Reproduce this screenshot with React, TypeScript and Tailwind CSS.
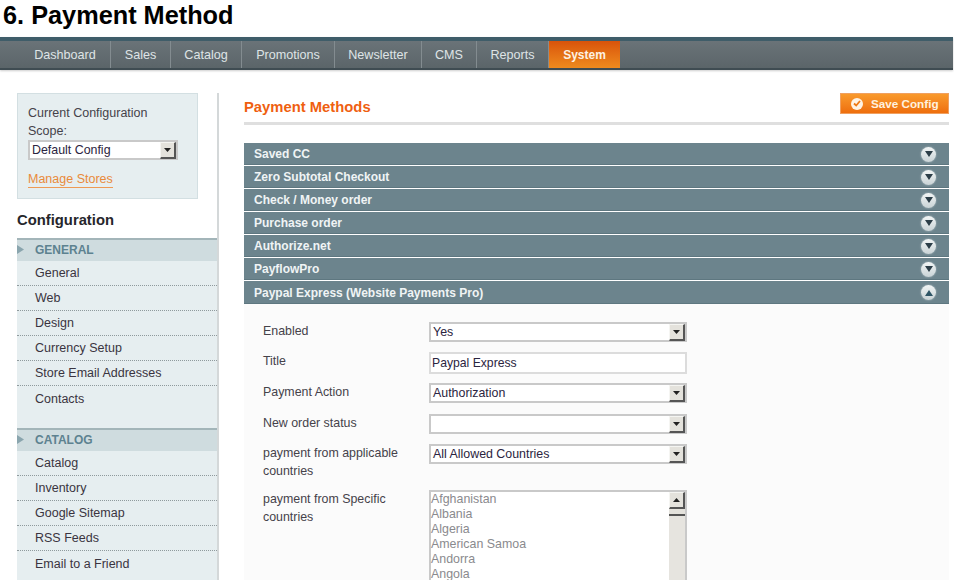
import React from 'react';

const tabs = [
  { label: 'Dashboard', width: 'w-[91px]' },
  { label: 'Sales', width: 'w-[60px]' },
  { label: 'Catalog', width: 'w-[71px]' },
  { label: 'Promotions', width: 'w-[93px]' },
  { label: 'Newsletter', width: 'w-[87px]' },
  { label: 'CMS', width: 'w-[55px]' },
  { label: 'Reports', width: 'w-[72px]' },
];
const closedSections = ['Saved CC', 'Zero Subtotal Checkout', 'Check / Money order', 'Purchase order', 'Authorize.net', 'PayflowPro'];
const generalLinks = ['General', 'Web', 'Design', 'Currency Setup', 'Store Email Addresses', 'Contacts'];
const catalogLinks = ['Catalog', 'Inventory', 'Google Sitemap', 'RSS Feeds', 'Email to a Friend'];
const countries = ['Afghanistan', 'Albania', 'Algeria', 'American Samoa', 'Andorra', 'Angola'];

const ArrowBox: React.FC<{ up?: boolean }> = ({ up }) => (
  <div className="flex items-center justify-center w-[16px] h-[17px] bg-[#e4e2dc] border-t border-l border-[#f5f5f2] border-r-2 border-b-2 border-r-[#555] border-b-[#555]">
    <svg width="7" height="4" viewBox="0 0 7 4">
      <path d={up ? 'M0 4 L3.5 0 L7 4 Z' : 'M0 0 L7 0 L3.5 4 Z'} fill="#222" />
    </svg>
  </div>
);

const SelectBox: React.FC<{ value?: string; className?: string }> = ({ value, className }) => (
  <div className={`flex items-center justify-between bg-white border-2 border-[#c9c9c9] text-[12.4px] text-[#2b2440] pl-[2px] ${className ?? 'w-[258px] h-[20px]'}`}>
    <span>{value}</span>
    <ArrowBox />
  </div>
);

const Section: React.FC<{ label: string; open?: boolean }> = ({ label, open }) => (
  <div className={`flex items-center justify-between pl-[10px] pr-[13px] pt-[1px] bg-[#6c848d] border-b border-[#5e7780] text-[12px] font-bold text-[#f0f4f5] ${open ? 'h-[23px]' : 'h-[22px] mb-[1px]'}`}>
    <span>{label}</span>
    <div className="flex items-center justify-center w-[15px] h-[15px] rounded-full bg-gradient-to-b from-[#f2f5f5] to-[#c9d3d6] shadow-[0_0_2px_rgba(220,230,232,0.7)]">
      <svg width="8" height="6" viewBox="0 0 8 6">
        <path d={open ? 'M0 6 L4 0 L8 6 Z' : 'M0 0 L8 0 L4 6 Z'} fill={open ? '#2f5566' : '#2c3e48'} />
      </svg>
    </div>
  </div>
);

const NavGroup: React.FC<{ title: string; links: string[] }> = ({ title, links }) => (
  <div>
    <div className="flex items-center h-[23px] pb-[2px] bg-[#cfdcdf] border-t-2 border-[#a3b5b9] text-[12px] font-bold text-[#5d8290]">
      <svg width="8" height="9" viewBox="0 0 8 9">
        <path d="M0 0 L7 4.5 L0 9 Z" fill="#8aa5ae" />
      </svg>
      <span className="ml-[10px]">{title}</span>
    </div>
    {links.map((link, i) => (
      <div
        key={link}
        className={`flex items-center h-[25px] pl-[18px] pt-[1px] text-[12.5px] text-[#3a3440] ${i < links.length - 1 ? 'border-b border-dotted border-[#8f9a9d]' : ''}`}
      >
        {link}
      </div>
    ))}
  </div>
);

const FormRow: React.FC<{ label: React.ReactNode; className: string; children: React.ReactNode }> = ({ label, className, children }) => (
  <div className={`flex items-start ${className}`}>
    <div className="w-[166px] text-[12.4px] leading-[18px] text-[#45424a]">{label}</div>
    {children}
  </div>
);

export default function App() {
  return (
    <div className="w-[954px] h-[584px] overflow-hidden bg-white font-['Liberation_Sans',Arial,sans-serif]">
      <h1 className="h-[37px] pl-[3px] pt-[1px] text-[25.3px] leading-[29px] font-bold text-black">6. Payment Method</h1>

      <div className="flex w-[953px] h-[33px] border-t-[4px] border-t-[#3f5d69] border-b-2 border-b-[#3f4c52] bg-gradient-to-b from-[#6a7378] to-[#5b6569] pl-[20px] shadow-[0_1px_2px_rgba(0,0,0,0.2)]">
        {tabs.map((tab) => (
          <div key={tab.label} className={`flex items-center justify-center pt-[1px] border-r border-[#838c90] text-[12.6px] text-[#dfe4e6] ${tab.width}`}>
            {tab.label}
          </div>
        ))}
        <div className="flex items-center justify-center w-[71px] pt-[1px] bg-gradient-to-b from-[#d9530a] to-[#ee8a1e] text-[12px] font-bold text-[#fdf1e3]">
          System
        </div>
      </div>

      <div className="flex mt-[23px] h-[487px] overflow-hidden">
        <aside className="ml-[17px] w-[202px] border-r-2 border-[#d4d8d9]">
          <div className="w-[181px] h-[106px] px-[10px] pt-[10px] bg-[#e6eef0] border border-[#d3dfe2] text-[12.5px] leading-[18px] text-[#45424a]">
            <div>Current Configuration<br />Scope:</div>
            <SelectBox value="Default Config" className="w-[150px] h-[20px]" />
            <div className="mt-[12px] inline-block border-b border-[#ee9a55] leading-[15px] text-[#e98a3a]">Manage Stores</div>
          </div>
          <h2 className="mt-[11px] h-[28px] text-[14.8px] leading-[20px] font-bold text-[#26262b]">Configuration</h2>
          <div className="bg-[#e6eef0]">
            <NavGroup title="GENERAL" links={generalLinks} />
            <div className="h-[17px]" />
            <NavGroup title="CATALOG" links={catalogLinks} />
            <div className="h-[4px]" />
          </div>
        </aside>

        <main className="ml-[25px] w-[705px]">
          <div className="flex items-start justify-between h-[32px] border-b-[3px] border-[#dfdfdf]">
            <h2 className="mt-[4px] text-[14.8px] leading-[20px] font-bold text-[#ef5f10]">Payment Methods</h2>
            <div className="flex items-center w-[109px] h-[21px] pl-[10px] gap-[8px] bg-gradient-to-b from-[#f99a2c] to-[#ee6e0c] border border-[#f0a060] text-[11.7px] font-bold text-[#fff1df]">
              <div className="flex items-center justify-center w-[12px] h-[12px] rounded-full bg-[#fff3e4]">
                <svg width="8" height="7" viewBox="0 0 8 7">
                  <path d="M1 3.5 L3.2 5.5 L7 1" fill="none" stroke="#ee7a14" strokeWidth="1.8" />
                </svg>
              </div>
              Save Config
            </div>
          </div>

          <div className="mt-[18px]">
            {closedSections.map((s) => (
              <Section key={s} label={s} />
            ))}
            <Section label="Paypal Express (Website Payments Pro)" open />
          </div>

          <div className="h-[300px] pl-[19px] pt-[18px] bg-[#fbfbfb]">
            <FormRow label="Enabled" className="h-[30px]">
              <SelectBox value="Yes" />
            </FormRow>
            <FormRow label="Title" className="h-[31px]">
              <div className="flex items-center w-[258px] h-[22px] bg-white border-2 border-[#dcdcdc] pl-[1px] text-[12.2px] text-[#2b2440]">Paypal Express</div>
            </FormRow>
            <FormRow label="Payment Action" className="h-[31px]">
              <SelectBox value="Authorization" />
            </FormRow>
            <FormRow label="New order status" className="h-[30px]">
              <SelectBox />
            </FormRow>
            <FormRow label={<>payment from applicable<br />countries</>} className="h-[46px]">
              <SelectBox value="All Allowed Countries" />
            </FormRow>
            <FormRow label={<>payment from Specific<br />countries</>} className="h-[100px]">
              <div className="flex justify-between w-[258px] h-[100px] bg-white border-2 border-[#c9c9c9]">
                <div className="text-[12.4px] leading-[15px] text-[#8a8a8e]">
                  {countries.map((c) => (
                    <div key={c}>{c}</div>
                  ))}
                </div>
                <div className="w-[16px] bg-[#e6e4df]">
                  <ArrowBox up />
                  <div className="h-[7px] bg-[#e4e2dc] border-b-2 border-[#555]" />
                </div>
              </div>
            </FormRow>
          </div>
        </main>
      </div>
    </div>
  );
}
